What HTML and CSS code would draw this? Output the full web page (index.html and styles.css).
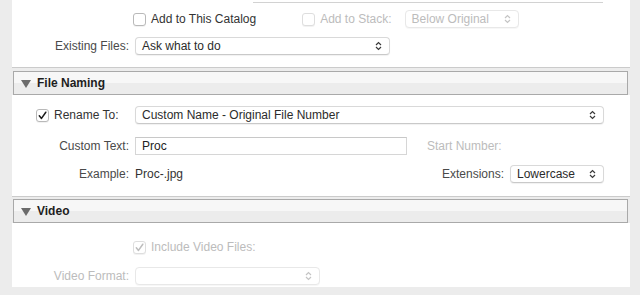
FILE: index.html
```html
<!DOCTYPE html>
<html>
<head>
    <title>Export</title>
    <link rel="stylesheet" href="styles.css">
</head>
<body>
    <div class="dialog">

        <!-- Location (bottom part) -->
        <div class="panel panel-top">
            <div class="cut-field"></div>
            <div class="row row-first">
                <span class="label"></span>
                <label class="check"><span class="box"></span>Add to This Catalog</label>
                <label class="check disabled stack"><span class="box"></span>Add to Stack:</label>
                <div class="popup disabled stack-popup">Below Original
                    <svg class="arrows" width="7" height="10" viewBox="0 0 7 10"><path d="M1 4L3.5 1.5L6 4M1 6L3.5 8.5L6 6"/></svg>
                </div>
            </div>
            <div class="row row-next">
                <span class="label">Existing Files:</span>
                <div class="popup existing">Ask what to do
                    <svg class="arrows" width="7" height="10" viewBox="0 0 7 10"><path d="M1 4L3.5 1.5L6 4M1 6L3.5 8.5L6 6"/></svg>
                </div>
            </div>
        </div>

        <!-- File Naming -->
        <div class="section-header"><span class="triangle"></span>File Naming</div>
        <div class="panel panel-naming">
            <div class="row">
                <label class="check rename"><span class="box"><svg width="11" height="11" viewBox="0 0 11 11"><path d="M2.3 5.8L4.5 8.4L8.8 2.2"/></svg></span>Rename To:</label>
                <div class="popup wide">Custom Name - Original File Number
                    <svg class="arrows" width="7" height="10" viewBox="0 0 7 10"><path d="M1 4L3.5 1.5L6 4M1 6L3.5 8.5L6 6"/></svg>
                </div>
            </div>
            <div class="row row-text">
                <span class="label">Custom Text:</span>
                <div class="field">Proc</div>
                <span class="side-label disabled">Start Number:</span>
            </div>
            <div class="row row-example">
                <span class="label">Example:</span>
                <span class="value">Proc-.jpg</span>
                <span class="spacer"></span>
                <span class="label-inline">Extensions:</span>
                <div class="popup ext">Lowercase
                    <svg class="arrows" width="7" height="10" viewBox="0 0 7 10"><path d="M1 4L3.5 1.5L6 4M1 6L3.5 8.5L6 6"/></svg>
                </div>
            </div>
        </div>

        <!-- Video -->
        <div class="section-header"><span class="triangle"></span>Video</div>
        <div class="panel panel-video">
            <div class="row">
                <span class="label"></span>
                <label class="check disabled"><span class="box"><svg width="11" height="11" viewBox="0 0 11 11"><path d="M2.3 5.8L4.5 8.4L8.8 2.2"/></svg></span>Include Video Files:</label>
            </div>
            <div class="row row-format">
                <span class="label disabled">Video Format:</span>
                <div class="popup disabled format">
                    <svg class="arrows" width="7" height="10" viewBox="0 0 7 10"><path d="M1 4L3.5 1.5L6 4M1 6L3.5 8.5L6 6"/></svg>
                </div>
            </div>
        </div>

    </div>
</body>
</html>
```

FILE: styles.css
```css
body {
    margin: 0;
    background-color: #ececec;
    font-family: 'Liberation Sans', Arial, sans-serif;
    font-size: 12px;
    color: #333;
}

.dialog {
    width: 618px;
    margin-left: 12px;
}

.panel {
    background: #ffffff;
    border-bottom: 1px solid #cbcbcb;
}

.panel-top {
    height: 67px;
}

.panel-naming {
    height: 102px;
    padding-top: 11px;
    box-sizing: border-box;
}

.panel-video {
    height: 64px;
    padding-top: 15px;
    box-sizing: border-box;
    border-bottom: none;
}

/* Section header bar */
.section-header {
    display: flex;
    align-items: center;
    height: 22px;
    margin: 3px 2px 0 1px;
    border: 1px solid #a9a9a9;
    background: linear-gradient(#f7f7f7 50%, #ececec 50%);
    font-weight: bold;
    color: #1e1e1e;
}

.panel-naming + .section-header {
    margin-top: 2px;
}

.triangle {
    width: 0;
    height: 0;
    margin: 1px 6px 0 7px;
    border-left: 5px solid transparent;
    border-right: 5px solid transparent;
    border-top: 8px solid #6b6b6b;
}

/* Rows */
.row {
    display: flex;
    align-items: center;
    height: 18px;
    line-height: 18px;
}

.row-first {
    margin-top: 7px;
}

.row-next {
    margin-top: 9px;
}

.row-text {
    margin-top: 13px;
}

.row-example {
    margin-top: 10px;
}

.row-format {
    margin-top: 11px;
}

.label {
    width: 117px;
    margin-right: 6px;
    text-align: right;
    color: #4a4a4a;
    flex-shrink: 0;
}

.label-inline {
    color: #4a4a4a;
    margin-right: 6px;
}

.value {
    color: #333;
}

.spacer {
    flex: 1;
}

.disabled {
    color: #bcbcbc !important;
}

/* Cut-off field from the block above */
.cut-field {
    width: 350px;
    height: 2px;
    margin-left: 241px;
    border-bottom: 1px solid #d2d2d2;
}

/* Checkboxes */
.check {
    display: flex;
    align-items: center;
    color: #333;
    margin-left: -2px;
}

.check .box {
    display: flex;
    width: 11px;
    height: 11px;
    margin-right: 5px;
    border: 1px solid #b9b9b9;
    border-radius: 3px;
    background: #fff;
    box-shadow: 0 1px 0 rgba(0, 0, 0, 0.05);
}

.check .box svg {
    fill: none;
    stroke: #1a1a1a;
    stroke-width: 1.5;
    stroke-linecap: round;
    stroke-linejoin: round;
}

.check.disabled .box {
    border-color: #dedede;
}

.check.disabled .box svg {
    stroke: #bdbdbd;
}

.check.stack {
    margin-left: 46px;
}

.check.rename {
    margin-left: 24px;
    width: 99px;
    flex-shrink: 0;
}

/* Popup buttons */
.popup {
    position: relative;
    height: 16px;
    line-height: 16px;
    padding-left: 6px;
    border: 1px solid #d9d9d9;
    border-bottom-color: #c9c9c9;
    border-radius: 4px;
    background: #fff;
    box-shadow: 0 1px 1px rgba(0, 0, 0, 0.06);
    color: #2b2b2b;
    box-sizing: content-box;
}

.popup.disabled {
    border-color: #e8e8e8;
    box-shadow: 0 1px 0 rgba(0, 0, 0, 0.03);
}

.popup .arrows {
    position: absolute;
    right: 7px;
    top: 3px;
    fill: none;
    stroke: #3a3a3a;
    stroke-width: 1.2;
}

.popup.disabled .arrows {
    stroke: #c4c4c4;
}

.stack-popup {
    width: 106px;
    margin-left: 13px;
}

.existing {
    width: 247px;
}

.wide {
    width: 461px;
}

.ext {
    width: 86px;
    margin-right: 26px;
}

.format {
    width: 177px;
}

/* Text field */
.field {
    width: 264px;
    height: 16px;
    line-height: 16px;
    padding-left: 6px;
    border: 1px solid #d6d6d6;
    border-top-color: #c8c8c8;
    background: #fff;
    color: #222;
}

.side-label {
    margin-left: 20px;
}
```
